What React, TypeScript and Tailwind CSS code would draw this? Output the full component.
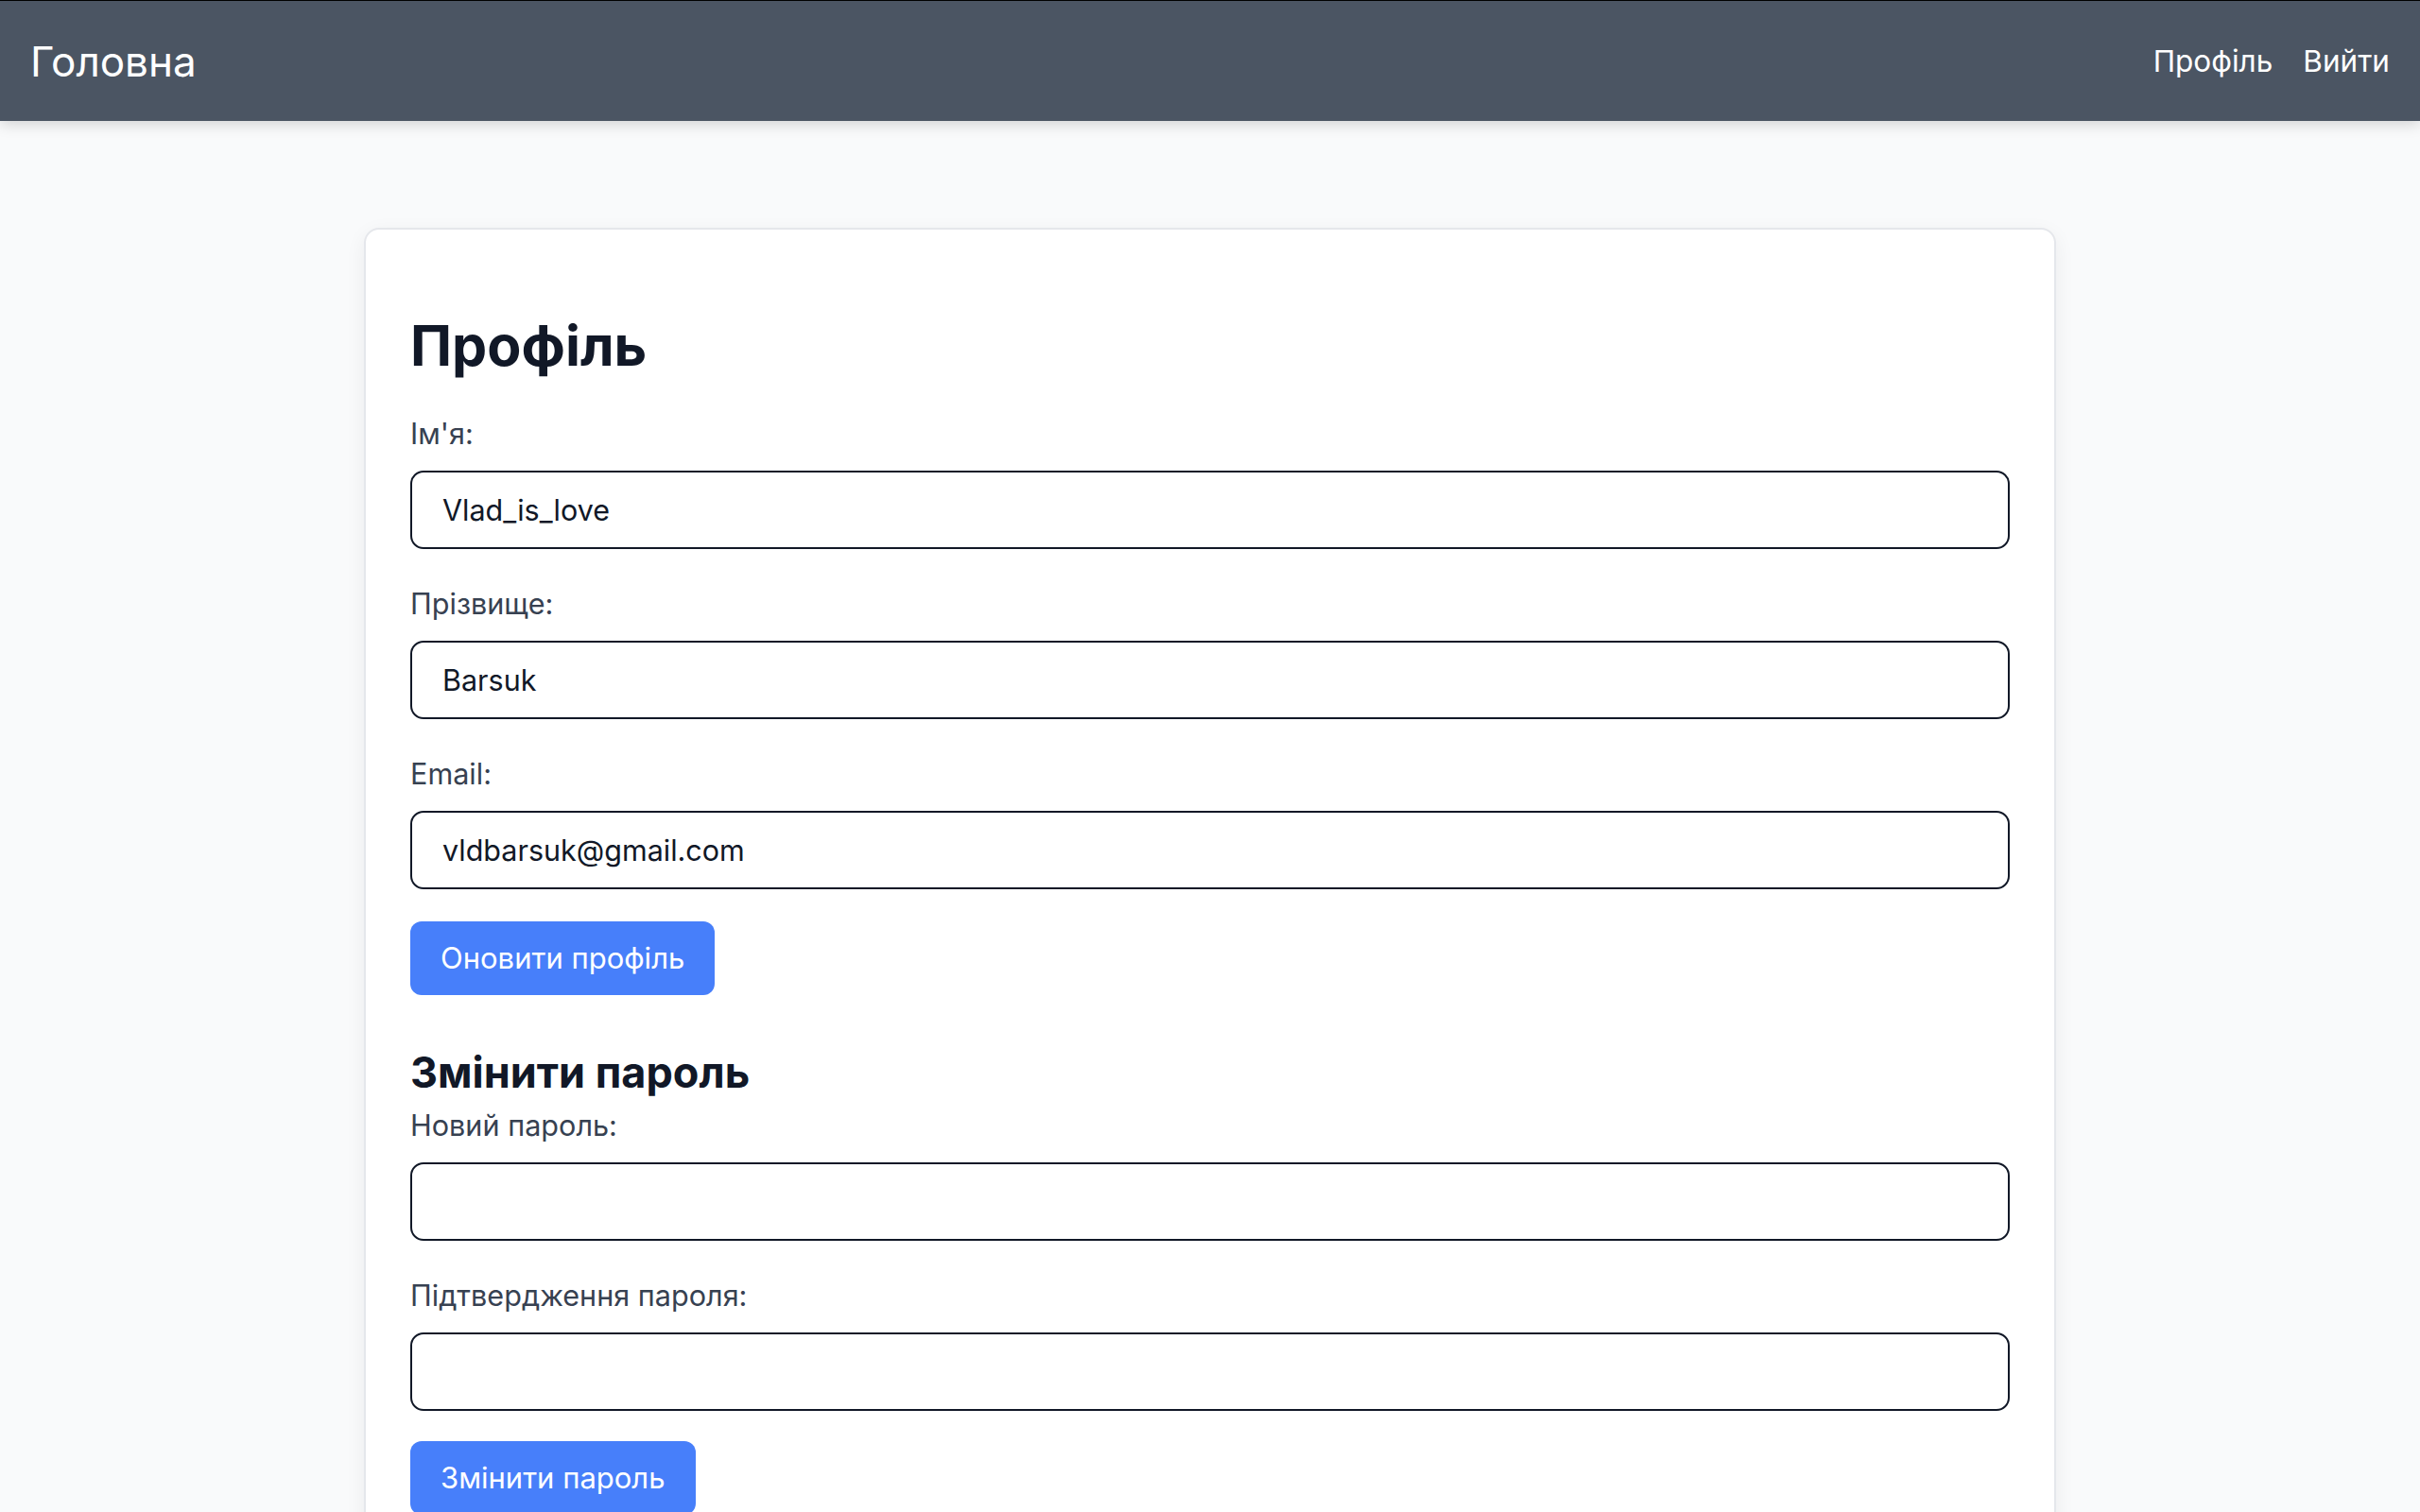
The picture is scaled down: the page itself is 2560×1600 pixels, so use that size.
import React from 'react';

const FONT = { fontFamily: 'Inter, "Noto Sans", sans-serif' };

function Field({ label, value, type = 'text', last = false }: { label: string; value?: string; type?: string; last?: boolean }) {
  return (
    <div className={last ? '' : 'mb-[38px]'}>
      <label className="block text-[30.6px] leading-[40px] text-[#374151]">{label}</label>
      <input
        type={type}
        defaultValue={value}
        className="mt-[19px] block h-[83px] w-full rounded-[14px] border-2 border-[#111827] bg-white px-[32px] text-[30.5px] text-[#111827] outline-none"
      />
    </div>
  );
}

export default function App() {
  return (
    <div className="h-screen overflow-hidden bg-[#f9fafb]" style={FONT}>
      {/* Top bar */}
      <header className="relative z-10 flex h-[128px] items-center justify-between border-t border-black bg-[#4b5563] px-[32px] shadow-[0_4px_14px_rgba(0,0,0,0.15)]">
        <a className="text-[44px] leading-[64px] text-white">Головна</a>
        <nav className="flex items-center gap-[32px] text-[31.5px] leading-[48px] text-white">
          <a>Профіль</a>
          <a>Вийти</a>
        </nav>
      </header>

      <main className="pt-[113px]">
        <div className="mx-auto w-[1790px] rounded-[16px] border-2 border-[#e5e7eb] bg-white px-[47px] pt-[87px] pb-[60px] shadow-[0_6px_22px_rgba(0,0,0,0.06)]">
          <h1 className="mb-[37px] text-[59px] font-bold leading-[72px] text-[#111827]">Профіль</h1>

          <Field label="Ім'я:" value="Vlad_is_love" />
          <Field label="Прізвище:" value="Barsuk" />
          <Field label="Email:" value="vldbarsuk@gmail.com" last />

          <button className="mt-[34px] flex h-[78px] items-center rounded-[12px] bg-[#477ffa] px-[32px] text-[31px] text-white">
            Оновити профіль
          </button>

          <h2 className="mt-[50px] text-[45px] font-bold leading-[64px] text-[#111827]">Змінити пароль</h2>
          <div className="mt-[4px]">
            <Field label="Новий пароль:" type="password" />
            <Field label="Підтвердження пароля:" type="password" last />
          </div>

          <button className="mt-[32px] flex h-[78px] items-center rounded-[12px] bg-[#477ffa] px-[32px] text-[31px] text-white">
            Змінити пароль
          </button>
        </div>
      </main>
    </div>
  );
}
